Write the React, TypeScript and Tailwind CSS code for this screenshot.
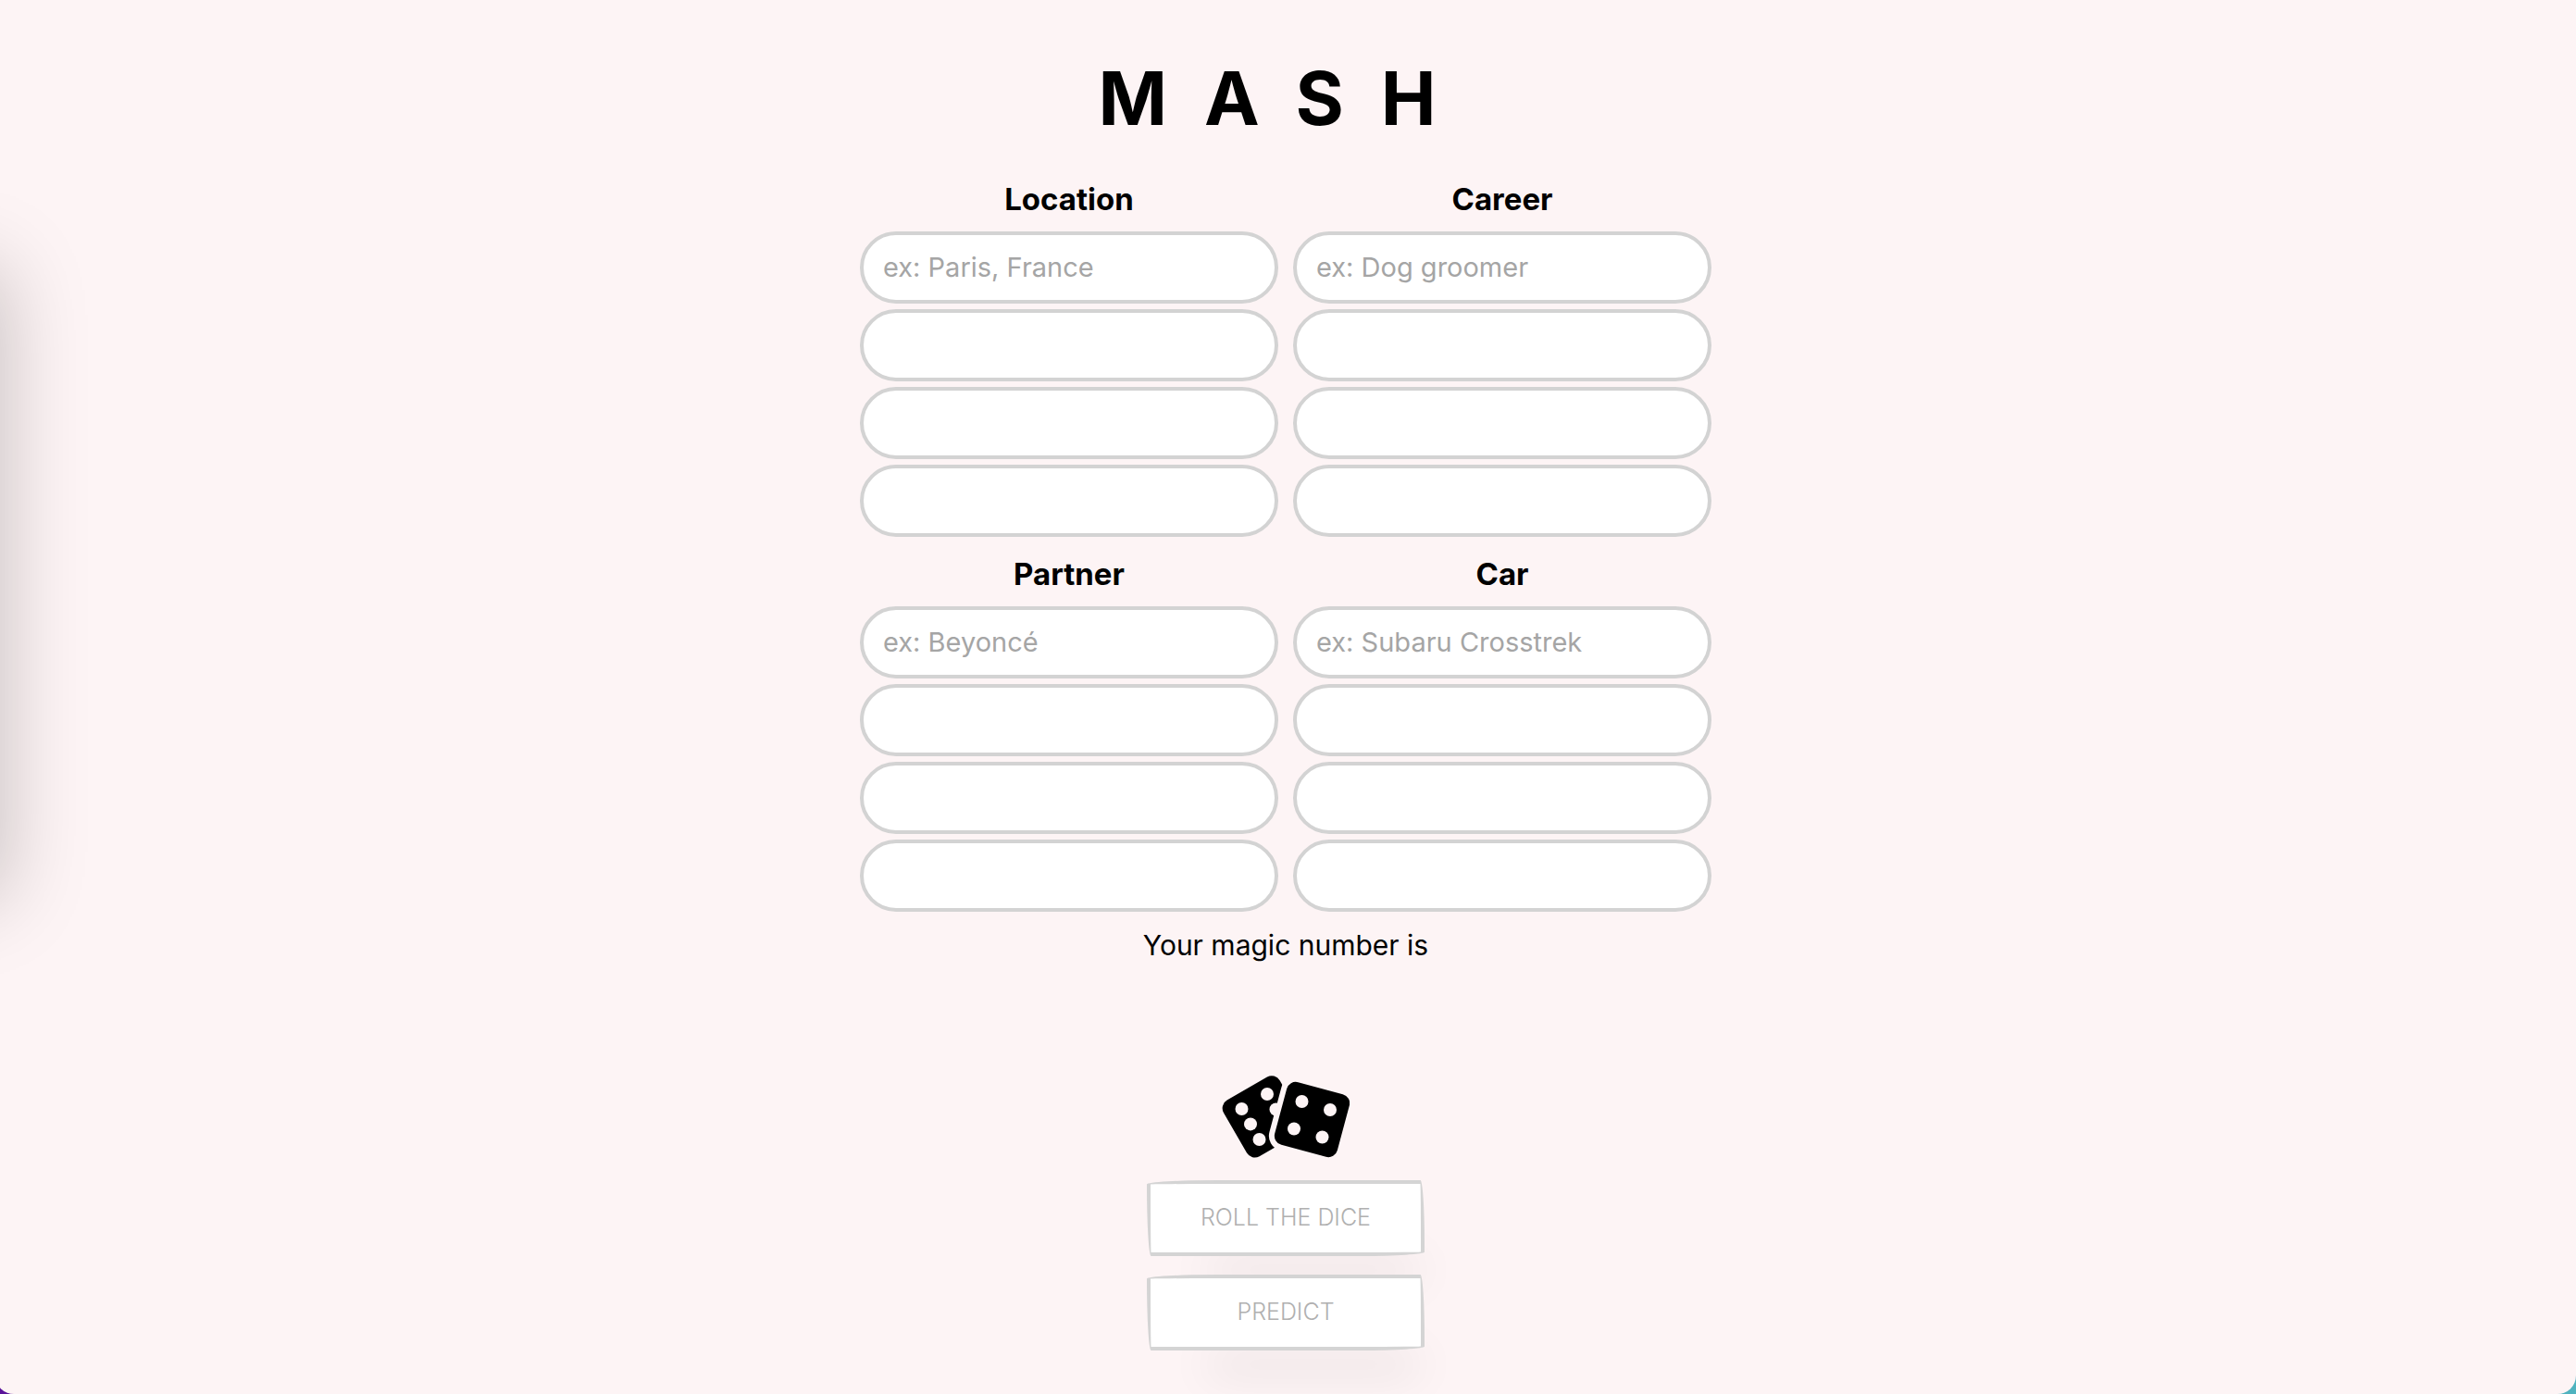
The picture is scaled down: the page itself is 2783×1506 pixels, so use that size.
const categories = [
  { id: 'location', label: 'Location', placeholder: 'ex: Paris, France' },
  { id: 'career', label: 'Career', placeholder: 'ex: Dog groomer' },
  { id: 'partner', label: 'Partner', placeholder: 'ex: Beyoncé' },
  { id: 'car', label: 'Car', placeholder: 'ex: Subaru Crosstrek' },
];

function Category({ id, label, placeholder }: { id: string; label: string; placeholder: string }) {
  return (
    <section aria-labelledby={id} className="flex flex-col">
      <h2 id={id} className="mb-[15px] text-center text-[33px] leading-10 font-bold">
        {label}
      </h2>
      <div className="flex flex-col gap-1.5">
        {[1, 2, 3, 4].map((n) => (
          <input
            key={n}
            type="text"
            aria-label={`${label} ${n}`}
            placeholder={n === 1 ? placeholder : undefined}
            className="h-[78px] w-full rounded-full border-4 border-[#d3d3d3] bg-white px-[21px] pb-0.5 text-[29px] placeholder:text-[#a5a5a5]"
          />
        ))}
      </div>
    </section>
  );
}

function Dice() {
  return (
    <svg viewBox="0 0 138 90" className="h-[90px] w-[138px]" role="img" aria-label="Dice">
      <mask id="rear">
        <rect width="138" height="90" fill="white" />
        <rect x="62.5" y="13.5" width="70" height="70" rx="10" transform="rotate(15 97.5 48.5)" fill="black" stroke="black" strokeWidth="12" />
        <g fill="black">
          <circle cx="49" cy="21" r="7" />
          <circle cx="21.5" cy="37" r="7" />
          <circle cx="31" cy="53.4" r="7" />
          <circle cx="40.5" cy="70" r="7" />
          <circle cx="58.5" cy="37.5" r="7" />
        </g>
      </mask>
      <mask id="front">
        <rect width="138" height="90" fill="white" />
        <g fill="black">
          <circle cx="86.5" cy="29" r="7" />
          <circle cx="117" cy="38" r="7" />
          <circle cx="78" cy="58.5" r="7" />
          <circle cx="108.5" cy="67.5" r="7" />
        </g>
      </mask>
      <g mask="url(#rear)">
        <rect x="9.8" y="10.4" width="70" height="70" rx="10" transform="rotate(-30 44.8 45.4)" />
      </g>
      <g mask="url(#front)">
        <rect x="62.5" y="13.5" width="70" height="70" rx="10" transform="rotate(15 97.5 48.5)" />
      </g>
    </svg>
  );
}

function SketchButton({ children }: { children: string }) {
  return (
    <button
      type="button"
      disabled
      className="h-[82px] w-[300px] rounded-[255px_15px_225px_15px/15px_225px_15px_255px] border-4 border-[#d4d4d4] bg-white text-[25px] font-light text-[#b0b0b0] shadow-[30px_56px_50px_-36px_rgba(0,0,0,0.2)]"
    >
      {children}
    </button>
  );
}

export default function App() {
  return (
    <div className="relative flex min-h-screen overflow-hidden bg-linear-to-r from-[#5a1299] to-[#4fb3bf] font-['Inter',sans-serif] text-black">
      <main className="-ml-[5px] flex flex-1 flex-col items-center rounded-b-[20px] bg-[#fdf4f5] pt-[66px]">
        <h1 className="mb-[49px] text-[80px] leading-[80px] font-bold tracking-[40px]">MASH</h1>
        <div className="grid w-full max-w-[920px] grid-cols-2 gap-x-4 gap-y-5">
          {categories.map((c) => (
            <Category key={c.id} {...c} />
          ))}
        </div>
        <p className="mt-4 mb-[120px] text-[30px] leading-10">Your magic number is</p>
        <Dice />
        <div className="mt-6 flex flex-col gap-5">
          <SketchButton>ROLL THE DICE</SketchButton>
          <SketchButton>PREDICT</SketchButton>
        </div>
      </main>
      <aside
        aria-hidden="true"
        className="absolute top-[290px] right-full h-[680px] w-[400px] shadow-[4px_0_84px_rgba(0,0,0,0.22)]"
      />
    </div>
  );
}
